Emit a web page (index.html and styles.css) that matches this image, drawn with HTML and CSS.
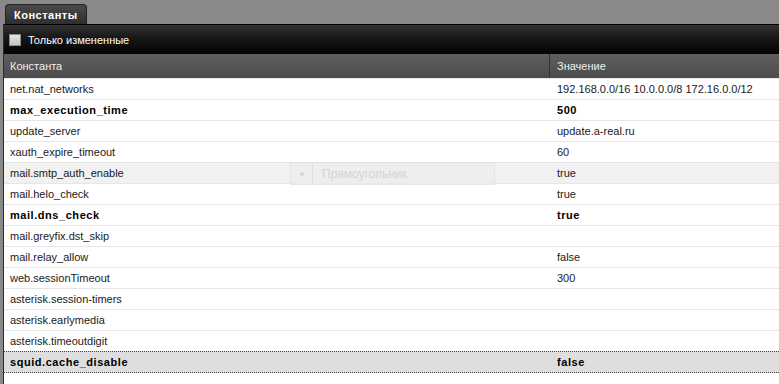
FILE: index.html
```html
<!DOCTYPE html>
<html lang="ru">
<head>
    <meta charset="UTF-8">
    <title>Константы</title>
    <link rel="stylesheet" href="styles.css">
</head>
<body>
    <div class="tabs">
        <div class="tab">Константы</div>
    </div>
    <div class="panel">
        <div class="toolbar">
            <span class="checkbox"></span>
            <span class="toolbar-label">Только измененные</span>
        </div>
        <div class="grid">
            <div class="grid-head">
                <div class="cell name">Константа</div>
                <div class="cell value">Значение</div>
            </div>
            <div class="row"><div class="cell name">net.nat_networks</div><div class="cell value">192.168.0.0/16 10.0.0.0/8 172.16.0.0/12</div></div>
            <div class="row changed"><div class="cell name">max_execution_time</div><div class="cell value">500</div></div>
            <div class="row"><div class="cell name">update_server</div><div class="cell value">update.a-real.ru</div></div>
            <div class="row"><div class="cell name">xauth_expire_timeout</div><div class="cell value">60</div></div>
            <div class="row hover"><div class="cell name">mail.smtp_auth_enable</div><div class="cell value">true</div></div>
            <div class="row"><div class="cell name">mail.helo_check</div><div class="cell value">true</div></div>
            <div class="row changed"><div class="cell name">mail.dns_check</div><div class="cell value">true</div></div>
            <div class="row"><div class="cell name">mail.greyfix.dst_skip</div><div class="cell value"></div></div>
            <div class="row"><div class="cell name">mail.relay_allow</div><div class="cell value">false</div></div>
            <div class="row"><div class="cell name">web.sessionTimeout</div><div class="cell value">300</div></div>
            <div class="row"><div class="cell name">asterisk.session-timers</div><div class="cell value"></div></div>
            <div class="row"><div class="cell name">asterisk.earlymedia</div><div class="cell value"></div></div>
            <div class="row"><div class="cell name">asterisk.timeoutdigit</div><div class="cell value"></div></div>
            <div class="row changed selected"><div class="cell name">squid.cache_disable</div><div class="cell value">false</div></div>
        </div>
        <!-- faint leftover shape label -->
        <div class="ghost">
            <span class="ghost-icon"><span class="ghost-dot"></span></span>
            <span class="ghost-text">Прямоугольник</span>
        </div>
    </div>
</body>
</html>
```

FILE: styles.css
```css
* {
    margin: 0;
    padding: 0;
    box-sizing: border-box;
}
body {
    font-family: 'Liberation Sans', Arial, sans-serif;
    font-size: 11px;
    color: #1a1a1a;
    background: #898989;
    height: 384px;
    overflow: hidden;
}
.tabs {
    height: 24px;
    padding-left: 5px;
    display: flex;
    align-items: flex-end;
}
.tab {
    width: 82px;
    height: 20px;
    line-height: 21px;
    padding-left: 8px;
    border: 1px solid #222;
    border-bottom: none;
    border-radius: 4px 4px 0 0;
    background: linear-gradient(#4a4a4a, #2e2e2e);
    color: #fff;
    font-weight: bold;
    letter-spacing: 0.5px;
}
.panel {
    position: relative;
    margin-left: 3px;
    border-left: 1px solid #2b2b2b;
    background: #fff;
    height: 360px;
}
.toolbar {
    height: 30px;
    border-top: 1px solid #000;
    background: linear-gradient(#323232, #171717 45%, #030303);
    display: flex;
    align-items: center;
    padding-left: 5px;
    color: #fff;
}
.checkbox {
    width: 12px;
    height: 12px;
    border: 1px solid #8a8a8a;
    background: linear-gradient(#e4e4e4, #c4c4c4);
    margin-right: 7px;
}
.toolbar-label {
    font-size: 11px;
}
.grid-head {
    display: flex;
    height: 24px;
    background: linear-gradient(#5e5e5e, #4c4c4c);
    color: #f0f0f0;
}
.grid-head .cell {
    line-height: 24px;
}
.grid-head .value {
    border-left: 1px solid #333;
}
.cell {
    white-space: nowrap;
    overflow: hidden;
}
.name {
    width: 545px;
    padding-left: 6px;
}
.value {
    flex: 1;
    padding-left: 7px;
}
.row {
    display: flex;
    height: 21px;
    line-height: 20px;
    border-top: 1px solid #e6e6e6;
}
.row .value {
    padding-left: 8px;
}
.row.changed {
    font-weight: bold;
    color: #000;
    letter-spacing: 0.55px;
}
.row.hover {
    background: #f1f1f1;
}
.row.selected {
    height: 22px;
    background: #dedede;
    border-top: 1px dotted #444;
    border-bottom: 1px dotted #444;
}
.ghost {
    position: absolute;
    left: 286px;
    top: 138px;
    width: 205px;
    height: 23px;
    display: flex;
    align-items: center;
    background: rgba(236, 236, 236, 0.6);
    border: 1px solid rgba(220, 220, 220, 0.5);
}
.ghost-icon {
    width: 22px;
    height: 21px;
    border-right: 1px solid rgba(215, 215, 215, 0.7);
    display: flex;
    align-items: center;
    justify-content: center;
}
.ghost-dot {
    width: 4px;
    height: 4px;
    border-radius: 50%;
    background: #d4d4d4;
}
.ghost-text {
    padding-left: 9px;
    font-size: 12px;
    color: #d4d4d4;
}
```
